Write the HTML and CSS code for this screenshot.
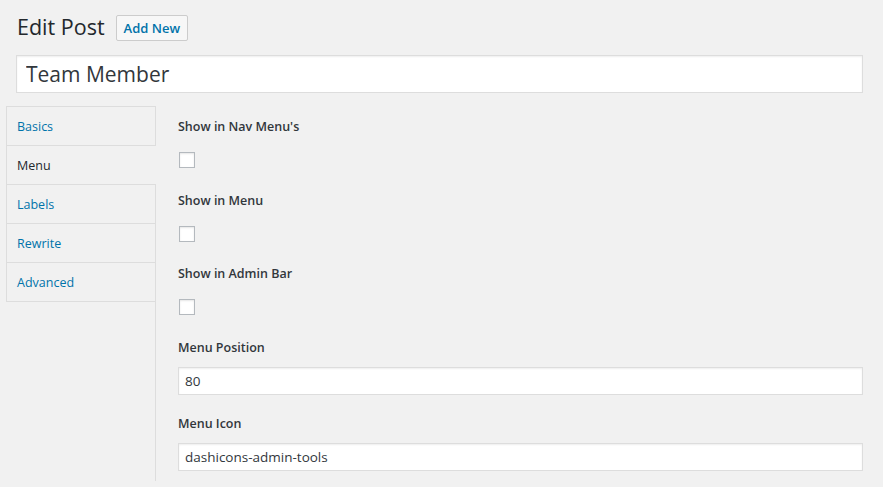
FILE: index.html
```html
<!DOCTYPE html>
<html lang="en">
<head>
<meta charset="utf-8">
<title>Edit Post</title>
<link rel="stylesheet" href="styles.css">
</head>
<body>
<div class="wrap">
  <div class="heading">
    <h1 class="title">Edit Post</h1>
    <a class="add-new" href="#">Add New</a>
  </div>
  <input class="post-title" type="text" value="Team Member">
  <div class="editor">
    <ul class="tabs">
      <li class="tab"><a href="#">Basics</a></li>
      <li class="tab active"><a href="#">Menu</a></li>
      <li class="tab"><a href="#">Labels</a></li>
      <li class="tab"><a href="#">Rewrite</a></li>
      <li class="tab"><a href="#">Advanced</a></li>
    </ul>
    <div class="panel">
      <div class="field">
        <label class="field-label">Show in Nav Menu's</label>
        <span class="check"></span>
      </div>
      <div class="field">
        <label class="field-label">Show in Menu</label>
        <span class="check"></span>
      </div>
      <div class="field">
        <label class="field-label">Show in Admin Bar</label>
        <span class="check"></span>
      </div>
      <div class="field">
        <label class="field-label">Menu Position</label>
        <input class="text-input" type="text" value="80">
      </div>
      <div class="field">
        <label class="field-label">Menu Icon</label>
        <input class="text-input" type="text" value="dashicons-admin-tools">
      </div>
    </div>
  </div>
</div>
</body>
</html>
```

FILE: styles.css
```css
* { box-sizing: border-box; }
html, body {
  margin: 0;
  padding: 0;
  background: #f1f1f1;
  font-family: "Open Sans", "Noto Sans", "Liberation Sans", sans-serif;
  color: #444;
  overflow: hidden;
}
.wrap {
  padding: 12px 20px 0 16px;
}
.heading {
  display: flex;
  align-items: center;
  height: 29px;
  margin-bottom: 14px;
}
.title {
  margin: 0 0 0 1px;
  font-size: 21.5px;
  font-weight: 400;
  line-height: 29px;
  color: #23282d;
}
.add-new {
  margin-left: 11px;
  margin-top: 2px;
  display: inline-block;
  height: 26px;
  padding: 0 7px;
  border: 1px solid #ccc;
  border-radius: 2px;
  background: #f7f7f7;
  color: #0073aa;
  font-size: 13px;
  font-weight: 600;
  line-height: 24px;
  text-decoration: none;
}
.post-title {
  display: block;
  width: 100%;
  height: 38px;
  margin: 0;
  padding: 0 9px;
  border: 1px solid #ddd;
  box-shadow: inset 0 1px 2px rgba(0,0,0,.07);
  background: #fff;
  font-family: inherit;
  font-size: 21px;
  color: #32373c;
  outline: none;
}
.editor {
  display: flex;
  margin-top: 13px;
  margin-left: -10px;
}
.tabs {
  list-style: none;
  margin: 0;
  padding: 0;
  width: 149px;
  flex: none;
  align-self: flex-start;
  border-top: 1px solid #ddd;
}
.tab {
  height: 39px;
  border: 1px solid #ddd;
  border-top: 0;
  border-right: 0;
  background: #f1f1f1;
}
.tab a {
  display: block;
  padding: 1px 10px 0;
  line-height: 37px;
  font-size: 12.5px;
  color: #0073aa;
  text-decoration: none;
}
.tab.active {
  position: relative;
  z-index: 1;
  margin-right: -1px;
}
.tab.active a {
  color: #23282d;
}
.panel {
  flex: 1;
  border-left: 1px solid #ddd;
  padding: 12px 0 10px 22px;
}
.field {
  display: flex;
  flex-direction: column;
  align-items: flex-start;
  margin-bottom: 20px;
}
.field:last-child {
  margin-bottom: 0;
}
.field-label {
  display: block;
  font-size: 12.5px;
  font-weight: 600;
  line-height: 18px;
  color: #32373c;
  margin-bottom: 10px;
}
.check {
  display: block;
  width: 16px;
  height: 16px;
  margin: 6px 0 3.7px 1px;
  border: 1px solid #b4b9be;
  background: #fff;
  box-shadow: inset 0 1px 2px rgba(0,0,0,.1);
}
.text-input {
  display: block;
  width: 100%;
  height: 28px;
  margin: 0;
  padding: 0 6px;
  border: 1px solid #ddd;
  box-shadow: inset 0 1px 2px rgba(0,0,0,.07);
  background: #fff;
  font-family: inherit;
  font-size: 13.5px;
  color: #32373c;
  outline: none;
}
```
